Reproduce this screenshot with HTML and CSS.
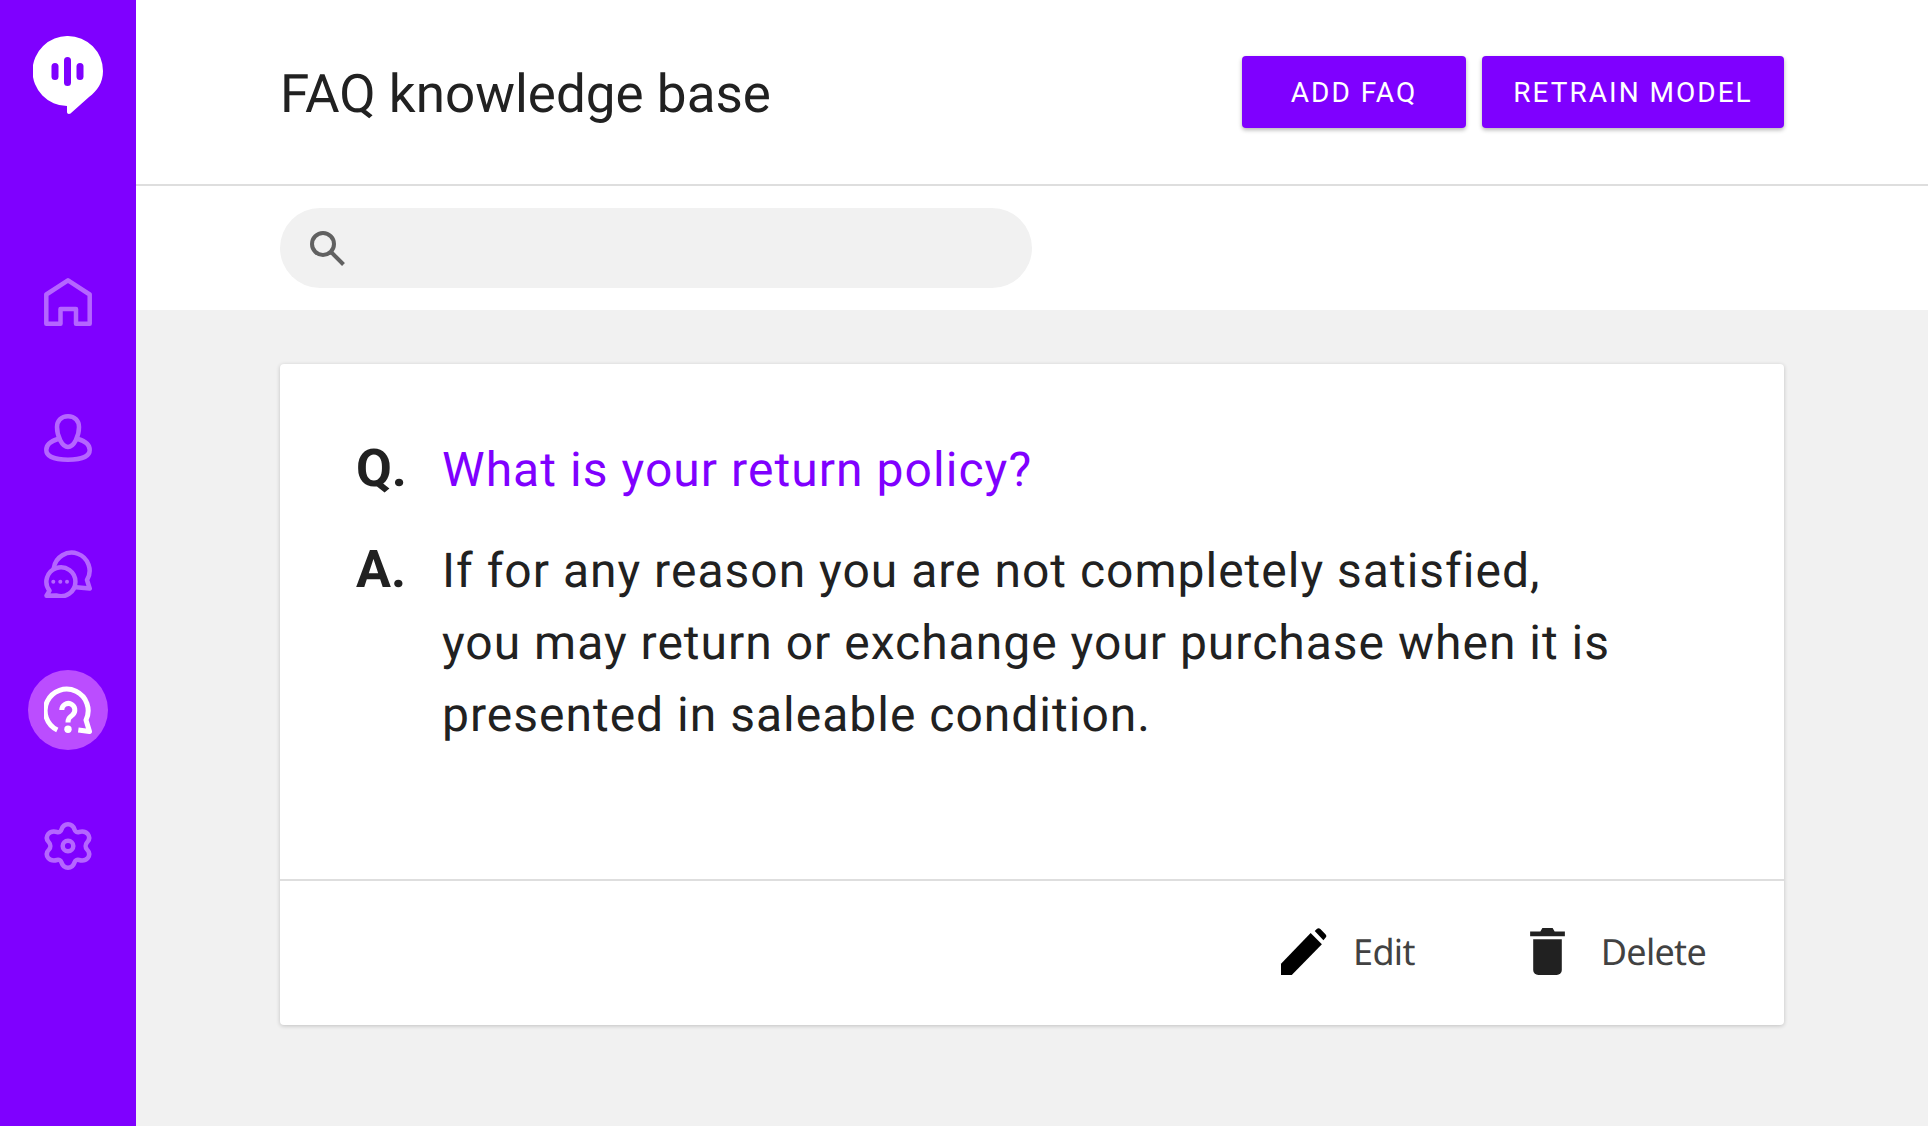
FILE: index.html
```html
<!DOCTYPE html>
<html lang="en">
<head>
    <meta charset="UTF-8">
    <title>FAQ knowledge base</title>
    <link rel="stylesheet" href="styles.css">
</head>
<body>
    <nav class="sidebar">
        <svg class="logo" viewBox="0 0 70 80" width="70" height="80">
            <path class="logo-bubble" d="M35 0a35 35 0 0 1 35 35c0 12-6 20-14 26L37.500 77.500c-1.500 1-3.500 .5-3.500-1.500V70A35 35 0 0 1 35 0z"/>
            <rect class="logo-bar" x="18.500" y="27" width="7" height="17" rx="3.500"/>
            <rect class="logo-bar" x="31" y="21" width="7" height="29" rx="3.500"/>
            <rect class="logo-bar" x="43.500" y="27" width="7" height="17" rx="3.500"/>
        </svg>

        <ul class="nav-list">
            <li class="nav-item">
                <svg class="nav-icon" viewBox="0 0 48 48" width="48" height="48">
                    <path d="M2.300 45.700V16.500L24 2.300l21.700 14.200v29.200H32V31H16.500v14.700z"/>
                </svg>
            </li>
            <li class="nav-item">
                <svg class="nav-icon" viewBox="0 0 48 48" width="48" height="48">
                    <path d="M24 2.300c7 0 11 4.700 11 10.700 0 9-5 20-11 20S13 22 13 13C13 7 17 2.300 24 2.300z"/>
                    <path d="M14 25C7 27 2.300 31 2.300 36c0 6 7.700 9.700 21.700 9.700S45.700 42 45.700 36c0-5-4.700-9-11.700-11"/>
                </svg>
            </li>
            <li class="nav-item">
                <svg class="nav-icon" viewBox="0 0 48 48" width="48" height="48">
                    <path d="M9.800 18A18 18 0 1 1 43 30l2.700 8.500-13.700-1.200"/>
                    <path d="M2.500 45.700l3-5A14.500 14.500 0 1 1 12 45.400z"/>
                    <g class="nav-dots">
                        <circle cx="9.300" cy="31.700" r="2"/>
                        <circle cx="16.300" cy="31.700" r="2"/>
                        <circle cx="23" cy="31.700" r="2"/>
                    </g>
                </svg>
            </li>
            <li class="nav-item active">
                <svg class="nav-icon" viewBox="0 0 48 48" width="48" height="48">
                    <path class="nav-ring" d="M13.300 44A21.500 21.500 0 1 1 42 34l3.500 11.500L34.300 44"/>
                    <path class="nav-ring" d="M17.800 24a6.500 6.500 0 1 1 10.800 4.800c-3 2.500-4.600 3.500-4.600 7.700"/>
                    <circle class="nav-fill" cx="24" cy="43.300" r="3.700"/>
                </svg>
            </li>
            <li class="nav-item">
                <svg class="nav-icon" viewBox="0 0 48 48" width="48" height="48">
                    <path d="M24 2.300C27.500 2.300 29.500 4.500 30.500 7.500 31 9.500 33 10.500 35 10 38.500 9 41.500 9.500 43.800 12 46 15 45.500 18 43 20.500 41.200 22.500 41.200 25.500 43 27.500 45.500 30 46 33 43.800 36 41.500 38.500 38.500 39 35 38 33 37.500 31 38.500 30.500 40.500 29.500 43.500 27.500 45.700 24 45.700 20.500 45.700 18.500 43.500 17.500 40.500 17 38.500 15 37.500 13 38 9.500 39 6.500 38.500 4.200 36 2 33 2.500 30 5 27.500 6.800 25.500 6.800 22.500 5 20.500 2.500 18 2 15 4.200 12 6.500 9.500 9.500 9 13 10 15 10.500 17 9.500 17.500 7.500 18.500 4.500 20.500 2.300 24 2.300z"/>
                    <circle cx="24" cy="24" r="5.300"/>
                </svg>
            </li>
        </ul>
    </nav>

    <main class="main">
        <header class="topbar">
            <h1 class="page-title">FAQ knowledge base</h1>
            <div class="topbar-actions">
                <button class="btn btn-add">ADD FAQ</button>
                <button class="btn btn-retrain">RETRAIN MODEL</button>
            </div>
        </header>

        <div class="search-row">
            <div class="search-box">
                <svg class="search-icon" viewBox="0 0 36 36" width="36" height="36">
                    <circle cx="13" cy="14" r="11"/>
                    <path d="M21.500 22.500L33.500 34.500"/>
                </svg>
            </div>
        </div>

        <section class="content">
            <article class="faq-card">
                <div class="faq-body">
                    <div class="faq-line">
                        <span class="faq-mark">Q.</span>
                        <p class="faq-question">What is your return policy?</p>
                    </div>
                    <div class="faq-line">
                        <span class="faq-mark">A.</span>
                        <p class="faq-answer">If for any reason you are not completely satisfied,<br>you may return or exchange your purchase when it is<br>presented in saleable condition.</p>
                    </div>
                </div>
                <div class="faq-actions">
                    <a class="faq-action faq-edit" href="#">
                        <svg viewBox="0 0 44 46" width="47" height="47">
                            <path d="M0 35L29 5l11 11-29.500 30H0z"/>
                            <path d="M33 3l2-2a2.500 2.500 0 0 1 3.500 0l5 5a2.500 2.500 0 0 1 0 3.500l-2 2.500z"/>
                        </svg>
                        <span>Edit</span>
                    </a>
                    <a class="faq-action faq-delete" href="#">
                        <svg viewBox="0 0 34 46" width="35" height="47">
                            <path d="M0 3.500h10L12 0h10l2 3.500h10V8H0z"/>
                            <path d="M3 11h28v30a5 5 0 0 1-5 5H8a5 5 0 0 1-5-5z"/>
                        </svg>
                        <span>Delete</span>
                    </a>
                </div>
            </article>
        </section>
    </main>
</body>
</html>
```

FILE: styles.css
```css
:root {
    --purple: #7f00ff;
    --page-bg: #f1f1f1;
    --text-color: #212121;
    --border-color: #dedede;
}

* {
    margin: 0;
    padding: 0;
    box-sizing: border-box;
}

html,
body {
    height: 100%;
}

body {
    display: flex;
    overflow: hidden;
    background-color: var(--page-bg);
    color: var(--text-color);
    font-family: Roboto, sans-serif;
    text-rendering: geometricPrecision;
}

.sidebar {
    flex: 0 0 136px;
    height: 100%;
    background-color: var(--purple);
    display: flex;
    flex-direction: column;
    align-items: center;
    padding-top: 36px;
}

.logo {
    display: block;
}

.logo-bubble {
    fill: #fff;
}

.logo-bar {
    fill: var(--purple);
}

.nav-list {
    list-style: none;
    margin-top: 146px;
    display: flex;
    flex-direction: column;
    align-items: center;
    gap: 56px;
}

.nav-item {
    width: 80px;
    height: 80px;
    border-radius: 50%;
    display: flex;
    align-items: center;
    justify-content: center;
}

.nav-icon {
    fill: none;
    stroke: #b566ff;
    stroke-width: 4.500;
    stroke-linecap: round;
    stroke-linejoin: round;
}

.nav-dots {
    fill: #b566ff;
    stroke: none;
}

.nav-item.active {
    background-color: #bb4dff;
}

.nav-item.active .nav-icon {
    stroke: #fff;
}

.nav-ring {
    stroke-width: 5;
    stroke-linecap: butt;
}

.nav-fill {
    fill: #fff;
    stroke: none;
}

.main {
    flex: 1;
    min-width: 0;
    display: flex;
    flex-direction: column;
}

.topbar {
    height: 186px;
    background-color: #fff;
    border-bottom: 2px solid var(--border-color);
    padding: 56px 144px 0;
    display: flex;
    justify-content: space-between;
    align-items: flex-start;
}

.page-title {
    font-size: 53px;
    font-weight: 400;
    line-height: 76px;
}

.topbar-actions {
    display: flex;
    gap: 16px;
}

.btn {
    height: 72px;
    border: none;
    border-radius: 4px;
    background-color: var(--purple);
    color: #fff;
    font-family: Roboto, sans-serif;
    font-size: 28px;
    font-weight: 450;
    letter-spacing: 2px;
    box-shadow: 0 2px 4px rgba(0, 0, 0, 0.3);
}

.btn-add {
    width: 224px;
}

.btn-retrain {
    width: 302px;
}

.search-row {
    height: 124px;
    background-color: #fff;
    padding: 22px 144px 0;
}

.search-box {
    width: 752px;
    height: 80px;
    border-radius: 40px;
    background-color: var(--page-bg);
    display: flex;
    align-items: center;
    padding-left: 30px;
}

.search-icon {
    fill: none;
    stroke: #616161;
    stroke-width: 4;
}

.content {
    flex: 1;
    padding: 54px 144px 0;
}

.faq-card {
    background-color: #fff;
    border-radius: 4px;
    box-shadow: 0 1px 4px rgba(0, 0, 0, 0.2);
}

.faq-body {
    height: 517px;
    padding: 69px 76px 0;
    border-bottom: 2px solid var(--border-color);
}

.faq-line {
    display: flex;
    align-items: baseline;
    font-size: 48px;
    line-height: 72px;
    letter-spacing: 1px;
    margin-bottom: 28px;
}

.faq-mark {
    flex: 0 0 86px;
    font-size: 52px;
    font-weight: 700;
    letter-spacing: 0;
}

.faq-question {
    color: var(--purple);
    letter-spacing: 1.050px;
}

.faq-actions {
    height: 144px;
    display: flex;
    justify-content: flex-end;
    align-items: center;
    gap: 115px;
    padding: 0 78px 3px 0;
}

.faq-action {
    display: flex;
    align-items: center;
    color: #424242;
    font-family: "Noto Sans", sans-serif;
    font-size: 36px;
    letter-spacing: -0.7px;
    text-decoration: none;
}

.faq-edit {
    gap: 26px;
}

.faq-delete {
    gap: 36px;
}

.faq-edit svg {
    fill: #000;
}

.faq-delete svg {
    fill: #212121;
}
```
